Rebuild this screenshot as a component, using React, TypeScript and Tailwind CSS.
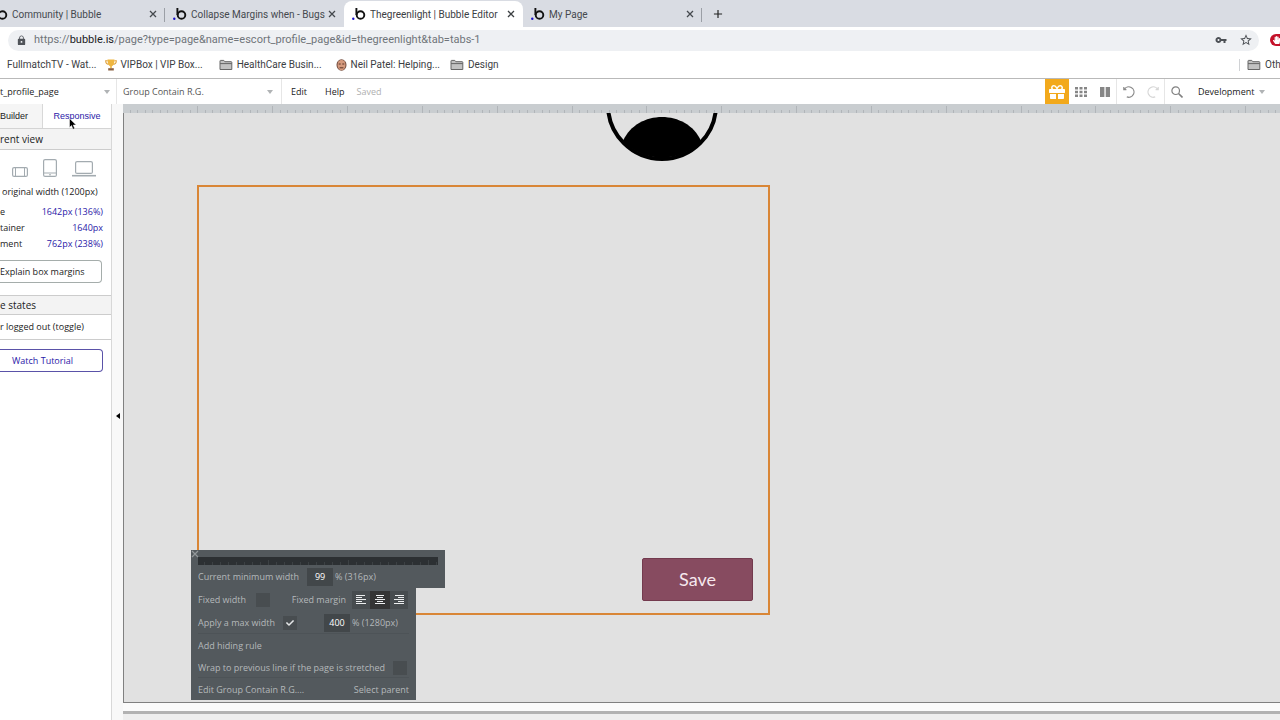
import type { ReactNode } from "react";
import { FaCheck, FaGift, FaHandPaper } from "react-icons/fa";
import { MdAdd, MdLock, MdStarBorder, MdVpnKey } from "react-icons/md";

type BrowserTabProps = {
  title: string;
  active?: boolean;
  divider?: boolean;
  clipped?: boolean;
};

function BubbleIcon() {
  return (
    <svg className="h-[14px] w-[14px] flex-shrink-0" viewBox="0 0 14 14" fill="none">
      <circle cx="8.5" cy="8" r="3.8" stroke="#111" strokeWidth="1.9" />
      <path d="M4.4 1v7" stroke="#111" strokeWidth="1.9" />
      <circle cx="1.3" cy="11.8" r="1.2" fill="#1b12c9" />
    </svg>
  );
}

function Cross() {
  return (
    <svg className="h-2 w-2" viewBox="0 0 8 8" stroke="currentColor">
      <path d="M1 1l6 6M7 1L1 7" strokeWidth="1.3" />
    </svg>
  );
}

function BrowserTab({ title, active, divider, clipped }: BrowserTabProps) {
  const width = clipped ? "w-[165px] justify-end pr-2" : "w-[179px] pl-2";
  const look = active ? "rounded-t-lg bg-white text-[#3c4043]" : "text-[#45494e]";
  return (
    <div className={`relative flex flex-shrink-0 items-center overflow-hidden ${width} ${look}`}>
      <BubbleIcon />
      <span className="ml-1 w-[134px] flex-shrink-0 overflow-hidden whitespace-nowrap">{title}</span>
      <button className="ml-[3px] flex-shrink-0" aria-label="Close tab">
        <Cross />
      </button>
      {divider && <span className="absolute top-[7px] right-0 h-[14px] w-px bg-[#9b9fa6]" />}
    </div>
  );
}

function Folder() {
  return (
    <svg className="h-3 w-[14px] flex-shrink-0" viewBox="0 0 14 12">
      <path d="M1 2q0-.6.6-.6h3.2l1 1.3h6.4q.6 0 .6.6v7.2H1z" fill="#c2c2c2" stroke="#666" />
      <path d="M1 4.6h11.8" stroke="#666" />
    </svg>
  );
}

function Trophy() {
  return (
    <svg className="h-3 w-3 flex-shrink-0" viewBox="0 0 12 12">
      <path d="M2.7 1.8H.7q0 3.4 3 3.6M9.3 1.8h2q0 3.4-3 3.6" fill="none" stroke="#dfa03b" strokeWidth="1.1" />
      <path d="M2.5.5h7q0 6-2.7 6.8v2H5.2v-2Q2.5 6.5 2.5.5z" fill="#efb640" />
      <path d="M3.2 9.2h5.6v2.3H3.2z" fill="#8a6040" />
    </svg>
  );
}

function Face() {
  return (
    <svg className="h-3 w-[11px] flex-shrink-0" viewBox="0 0 11 12">
      <ellipse cx="5.5" cy="6" rx="5" ry="5.8" fill="#6f4a3d" />
      <ellipse cx="5.5" cy="6" rx="4" ry="5.2" fill="#d59a7e" />
      <path d="M2.7 5h2M6.3 5h2M3.6 8.8h3.8" stroke="#5b3528" />
    </svg>
  );
}

function Bookmark({ icon, children }: { icon?: ReactNode; children: ReactNode }) {
  return (
    <a href="#" className="flex items-center gap-1 whitespace-nowrap">
      {icon}
      {children}
    </a>
  );
}

function Caret() {
  return (
    <svg className="h-1 w-[6px] flex-shrink-0" viewBox="0 0 6 4">
      <path d="M0 0h6L3 4z" fill="#b0b3b5" />
    </svg>
  );
}

function Browser() {
  return (
    <header className="font-['Roboto',sans-serif] text-[#3c4043]">
      {/* Tabs */}
      <div className="flex h-[27px] overflow-hidden bg-[#d9dce3] pt-px text-[10px]">
        <BrowserTab title="Community | Bubble" clipped divider />
        <BrowserTab title="Collapse Margins when - Bugs" />
        <BrowserTab title="Thegreenlight | Bubble Editor" active />
        <BrowserTab title="My Page" divider />
        <button className="px-[9px]" aria-label="New tab">
          <MdAdd className="h-[14px] w-[14px] text-[#222]" />
        </button>
      </div>

      {/* Address bar */}
      <div className="flex h-[26px] items-center overflow-hidden bg-white pl-2">
        <div className="flex h-[21px] min-w-0 flex-1 items-center rounded-full bg-[#eef0f3] pr-[6px] pl-2">
          <MdLock className="h-[11px] w-[11px] text-[#50545a]" />
          <a href="#" className="ml-[7px] flex-1 text-[11px] text-[#70757a]">
            https://<span className="text-[#202124]">bubble.is</span>
            /page?type=page&amp;name=escort_profile_page&amp;id=thegreenlight&amp;tab=tabs-1
          </a>
          <button aria-label="Saved passwords">
            <MdVpnKey className="h-3 w-3 text-[#4c5055]" />
          </button>
          <button className="ml-3" aria-label="Bookmark this page">
            <MdStarBorder className="h-[14px] w-[14px] text-[#4c5055]" />
          </button>
        </div>
        <span className="ml-[11px] flex h-3 w-[10px] items-center rounded-l-full bg-[#c4122a] pl-[3px]">
          <FaHandPaper className="h-2 w-[7px] flex-shrink-0 text-white" />
        </span>
      </div>

      {/* Bookmarks */}
      <nav className="flex h-[26px] items-center overflow-hidden border-b border-[#b9b9b9] bg-white pb-[2px] pl-[7px] text-[10px]">
        <Bookmark>FullmatchTV - Wat...</Bookmark>
        <span className="w-2" />
        <Bookmark icon={<Trophy />}>VIPBox | VIP Box...</Bookmark>
        <span className="w-4" />
        <Bookmark icon={<Folder />}>HealthCare Busin...</Bookmark>
        <span className="w-[14px]" />
        <Bookmark icon={<Face />}>Neil Patel: Helping...</Bookmark>
        <span className="w-[10px]" />
        <Bookmark icon={<Folder />}>Design</Bookmark>
        <div className="ml-auto flex h-3 w-[41px] items-center border-l border-[#d0d2d5] pl-[7px]">
          <Bookmark icon={<Folder />}>Oth</Bookmark>
        </div>
      </nav>
    </header>
  );
}

function ToolButton({ label, line, children }: { label: string; line?: boolean; children: ReactNode }) {
  const edge = line ? "border-r border-[#e6e6e6]" : "";
  return (
    <button aria-label={label} className={`flex h-full w-6 items-center justify-center ${edge}`}>
      {children}
    </button>
  );
}

function Toolbar() {
  return (
    <div className="flex h-[25px] items-center overflow-hidden bg-white text-[9px] text-[#222]">
      <div className="flex h-full w-[117px] items-center border-r border-[#e6e6e6] pr-[6px]">
        <select aria-label="Page" className="min-w-0 flex-1 appearance-none">
          <option>t_profile_page</option>
        </select>
        <Caret />
      </div>
      <div className="flex h-full w-[165px] items-center border-r border-[#e6e6e6] pr-2 pl-[6px] text-[#555]">
        <select aria-label="Element" className="min-w-0 flex-1 appearance-none">
          <option>Group Contain R.G.</option>
        </select>
        <Caret />
      </div>
      <button className="ml-[9px]">Edit</button>
      <button className="ml-[18px]">Help</button>
      <span className="ml-3 text-[#b0b0b0]">Saved</span>

      <div className="ml-auto flex h-full w-[235px] items-center">
        <button aria-label="Gift" className="flex h-full w-6 items-center justify-center bg-[#f2a91c]">
          <FaGift className="h-4 w-4 text-white" />
        </button>
        <ToolButton label="Grid">
          <svg className="h-[10px] w-3" viewBox="0 0 12 10" fill="#868686">
            <path d="M0 0h3v2.6H0zM4.5 0h3v2.6h-3zM9 0h3v2.6H9zM0 3.7h3v2.6H0zM4.5 3.7h3v2.6h-3zM9 3.7h3v2.6H9zM0 7.4h3V10H0zM4.5 7.4h3V10h-3zM9 7.4h3V10H9z" />
          </svg>
        </ToolButton>
        <ToolButton label="Columns" line>
          <svg className="h-[10px] w-[10px]" viewBox="0 0 10 10" fill="#868686">
            <path d="M0 0h4.4v10H0zM5.7 0H10v10H5.7z" />
          </svg>
        </ToolButton>
        <ToolButton label="Undo">
          <svg className="h-3 w-3" viewBox="0 0 12 12" fill="none" stroke="#8a8a8a">
            <path d="M.8 1v2.6h2.6M1.3 3.4A5.2 5.2 0 1 1 3.8 10.9" strokeWidth="1.2" />
          </svg>
        </ToolButton>
        <ToolButton label="Redo" line>
          <svg className="h-3 w-3" viewBox="0 0 12 12" fill="none" stroke="#d6d6d6">
            <path d="M11.2 1v2.6H8.6M10.7 3.4A5.2 5.2 0 1 0 8.2 10.9" strokeWidth="1.2" />
          </svg>
        </ToolButton>
        <ToolButton label="Search">
          <svg className="h-3 w-3" viewBox="0 0 12 12" fill="none" stroke="#808080">
            <circle cx="4.7" cy="4.7" r="3.8" strokeWidth="1.2" />
            <path d="M7.5 7.5l4 4" strokeWidth="1.6" />
          </svg>
        </ToolButton>
        <button className="flex items-center gap-[5px] pl-[9px]">
          Development
          <Caret />
        </button>
      </div>
    </div>
  );
}

function WidthRow({ label, value }: { label: string; value: string }) {
  return (
    <div className="flex h-4 items-center justify-between pr-2">
      <span>{label}</span>
      <span className="text-[#2a20a8]">{value}</span>
    </div>
  );
}

function Sidebar() {
  return (
    <aside className="w-28 flex-shrink-0 overflow-hidden border-r border-[#d8d8d8] bg-white text-[9px] whitespace-nowrap text-[#222]">
      {/* Tabs */}
      <div className="flex h-[25px] border-b border-[#d4d4d4] font-['Liberation_Sans',sans-serif]">
        <button className="w-[43px] border-r border-[#d8d8d8] bg-[#f5f5f5] pt-[2px] text-left">Builder</button>
        <button className="flex-1 pt-[2px] text-[#2a20a8]">Responsive</button>
      </div>
      <h2 className="flex h-[21px] items-center border-b border-[#ccc] bg-[#f3f3f3] text-[10px]">rent view</h2>

      {/* Device sizes */}
      <div className="flex h-[27px] items-end gap-[15px] pl-3">
        <button aria-label="Phone">
          <svg className="h-[10px] w-4" viewBox="0 0 16 10" fill="none" stroke="#a3abb0">
            <rect x=".6" y=".6" width="14.8" height="8.8" rx="1.5" strokeWidth="1.2" />
            <path d="M3.5.5v9M12.5.5v9" />
          </svg>
        </button>
        <button aria-label="Tablet">
          <svg className="h-[18px] w-[14px]" viewBox="0 0 14 18" fill="none" stroke="#a3abb0">
            <rect x=".6" y=".6" width="12.8" height="16.8" rx="1.5" strokeWidth="1.2" />
            <path d="M1 14h12M6 15.8h2" />
          </svg>
        </button>
        <button aria-label="Laptop">
          <svg className="h-4 w-6" viewBox="0 0 24 16" fill="none" stroke="#a3abb0">
            <rect x="3.6" y=".6" width="16.8" height="11.8" rx="1.5" strokeWidth="1.2" />
            <path d="M0 14.7h24" strokeWidth="1.6" />
          </svg>
        </button>
      </div>
      <p className="flex h-[27px] items-center pt-[2px] pl-[2px]">original width (1200px)</p>
      <WidthRow label="e" value="1642px (136%)" />
      <WidthRow label="tainer" value="1640px" />
      <WidthRow label="ment" value="762px (238%)" />
      <button className="mt-2 mb-3 flex h-[23px] w-[102px] items-center rounded-r border border-l-0 border-[#a5adab]">
        Explain box margins
      </button>
      <h2 className="flex h-5 items-center border-y border-[#ccc] bg-[#f3f3f3] text-[10px]">e states</h2>
      <button className="flex h-[25px] w-full items-center border-b border-[#ccc]">r logged out (toggle)</button>
      <button className="mt-[9px] flex h-[23px] w-[103px] items-center rounded-r border border-l-0 border-[#5a52a8] pl-3 text-[#2a20a8]">
        Watch Tutorial
      </button>
    </aside>
  );
}

function Ruler() {
  const ticks = Array.from({ length: 340 }, (_, i) => i);
  return (
    <svg className="h-[9px] w-full flex-shrink-0 bg-[#c9cdd0]">
      {ticks.map((i) => (
        <rect
          key={i}
          x={Math.round(7 + i * 7.484)}
          y={i % 10 === 9 ? 2 : 6}
          width="1"
          height={i % 10 === 9 ? 7 : 3}
          fill="#b1b5b9"
        />
      ))}
    </svg>
  );
}

const alignPaths = {
  left: "M0 .5h9M0 2.5h6M0 4.5h10M0 6.5h6M0 8.5h10",
  center: "M1 .5h8M2 2.5h6M0 4.5h10M2 6.5h6M0 8.5h10",
  right: "M1 .5h9M4 2.5h6M0 4.5h10M4 6.5h6M0 8.5h10",
};

function AlignIcon({ side }: { side: keyof typeof alignPaths }) {
  return (
    <svg className="h-[10px] w-[10px]" viewBox="0 0 10 10" stroke="#eceeef">
      <path d={alignPaths[side]} />
    </svg>
  );
}

function PropertyPanel() {
  const numberBox = "h-[18px] w-[26px] bg-[#42474a] text-center text-white";
  const tick = "h-[14px] w-[14px] appearance-none bg-[#484d50]";
  return (
    <section className="absolute top-[437px] left-[67px] w-[254px] text-[9px] whitespace-nowrap text-[#b4b8ba]">
      <div className="h-[38px] bg-[#53595d] px-[7px] pt-[7px]">
        <button aria-label="Close" className="absolute top-0 left-0 text-[#92979a]">
          <Cross />
        </button>
        <svg className="h-2 w-full bg-[#2c3033]">
          {Array.from({ length: 31 }, (_, i) => (
            <rect key={i} x={i * 8 + 6} y={i % 10 === 8 ? 3 : 5} width="1" height="5" fill="#3c4144" />
          ))}
        </svg>
        <label className="flex h-[23px] items-center">
          Current minimum width
          <input className={`mr-[2px] ml-2 ${numberBox}`} defaultValue="99" />% (316px)
        </label>
      </div>
      <div className="w-[225px] bg-[#53595d] px-[7px]">
        <div className="flex h-6 items-center">
          <label className="flex items-center gap-[10px]">
            Fixed width
            <input type="checkbox" className={tick} />
          </label>
          <span className="ml-auto">Fixed margin</span>
          <div className="mr-px ml-[6px] flex h-[18px] bg-[#474c4f]">
            <button aria-label="Align left" className="flex w-[18px] items-center justify-center">
              <AlignIcon side="left" />
            </button>
            <button aria-label="Align center" className="flex w-5 items-center justify-center bg-[#343434]">
              <AlignIcon side="center" />
            </button>
            <button aria-label="Align right" className="flex w-[18px] items-center justify-center">
              <AlignIcon side="right" />
            </button>
          </div>
        </div>
        <div className="flex h-[21px] items-center">
          <label className="flex items-center gap-2">
            Apply a max width
            <span className="relative flex">
              <input type="checkbox" defaultChecked className={tick} />
              <FaCheck className="pointer-events-none absolute top-[3px] left-[3px] h-2 w-2 text-[#e4e6e7]" />
            </span>
          </label>
          <input aria-label="Max width percent" className={`mr-[2px] ml-[27px] ${numberBox}`} defaultValue="400" />% (1280px)
        </div>
        <button className="flex h-[25px] w-full items-center border-t border-[#4d5357]">Add hiding rule</button>
        <label className="flex h-[19px] items-center justify-between pr-[2px]">
          Wrap to previous line if the page is stretched
          <input type="checkbox" className={tick} />
        </label>
        <div className="flex h-[23px] items-center justify-between border-t border-[#4d5357] pt-[2px]">
          <button>Edit Group Contain R.G....</button>
          <button>Select parent</button>
        </div>
      </div>
    </section>
  );
}

function Canvas() {
  return (
    <main className="relative flex-1 overflow-hidden border-b border-l border-[#808080] bg-[#e1e1e1]">
      {/* Avatar */}
      <svg className="absolute top-0 left-[481px] h-[49px] w-[114px]" viewBox="0 0 114 49">
        <circle cx="57" cy="-8" r="54" fill="none" stroke="#000" strokeWidth="4" />
        <path d="M18 28C32-4 82-4 96 28A54 54 0 0 1 18 28z" />
      </svg>

      {/* Selected group */}
      <div className="absolute top-[72px] left-[73px] h-[430px] w-[573px] border-2 border-[#d98636]" />
      <button className="absolute top-[445px] left-[518px] h-[43px] w-[111px] rounded-xs border border-[#733a4e] bg-[#874b60] font-['Lato',sans-serif] text-[18px] text-[#f6e8ee]">
        Save
      </button>
      <PropertyPanel />
    </main>
  );
}

export default function App() {
  return (
    <div className="relative flex min-h-screen flex-col overflow-hidden bg-white font-['Open_Sans','Noto_Sans',sans-serif]">
      <Browser />
      <Toolbar />
      <div className="flex flex-1">
        <Sidebar />
        <div className="flex w-[11px] flex-shrink-0 items-center justify-center bg-[#f8f8f8] pt-2">
          <button aria-label="Collapse sidebar">
            <svg className="h-[6px] w-1" viewBox="0 0 4 6">
              <path d="M4 0v6L0 3z" />
            </svg>
          </button>
        </div>
        <div className="flex min-w-0 flex-1 flex-col">
          <Ruler />
          <Canvas />
          <div className="h-2 bg-[#fbfbfb]" />
          <div className="h-[3px] bg-[#b2b2b2]" />
          <div className="h-[6px] bg-[#eeeeee]" />
        </div>
      </div>

      {/* Mouse pointer */}
      <svg className="pointer-events-none absolute top-[118px] left-[69px] h-3 w-2" viewBox="0 0 8 12">
        <path d="M.5.5v9l2-2 1.5 3.8 1.7-.7L4.2 7h3z" fill="#000" stroke="#fff" strokeWidth=".5" />
      </svg>
    </div>
  );
}
